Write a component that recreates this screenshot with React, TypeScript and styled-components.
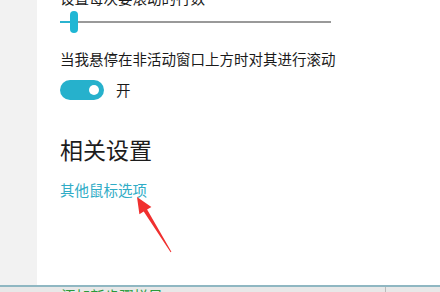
import styled, { createGlobalStyle } from 'styled-components'

const Global = createGlobalStyle`
  html, body { margin: 0; padding: 0; background: #fff; }
  body { width: 440px; height: 292px; overflow: hidden; font-family: "Noto Sans CJK SC", "Noto Sans", sans-serif; }
`

const Shell = styled.div`
  width: 440px;
  height: 292px;
  display: flex;
  flex-direction: column;
  overflow: hidden;
`

const Body = styled.div`
  flex: 1;
  display: flex;
  min-height: 0;
`

const Side = styled.div`
  width: 37px;
  background: #f2f2f2;
`

const Main = styled.div`
  position: relative;
  flex: 1;
  background: #fff;
  padding: 0 0 0 23px;
  margin-top: -12px;
`

const Label = styled.div<{ $gap?: number }>`
  font-size: 14.5px;
  color: #1a1a1a;
  line-height: 20px;
  margin-top: ${p => p.$gap ?? 0}px;
`

const SliderRow = styled.div`
  position: relative;
  width: 271px;
  height: 24px;
  margin-top: 2px;
  display: flex;
  align-items: center;
`

const Track = styled.div`
  flex: 1;
  height: 2px;
  background: #999;
  background-image: linear-gradient(to right, #2bb3cf 0 12px, transparent 12px);
`

const Thumb = styled.div`
  position: absolute;
  left: 10px;
  top: 1px;
  width: 8px;
  height: 22px;
  border-radius: 4px;
  background: #1fb6d4;
`

const ToggleRow = styled.div`
  display: flex;
  align-items: center;
  gap: 12px;
  margin-top: 11px;
`

const Toggle = styled.div`
  width: 44px;
  height: 20px;
  border-radius: 10px;
  background: #26b1cc;
  display: flex;
  align-items: center;
  justify-content: flex-end;
  padding-right: 5px;
  box-sizing: border-box;
`

const Knob = styled.div`
  width: 10px;
  height: 10px;
  border-radius: 50%;
  background: #fff;
`

const Heading = styled.div`
  font-size: 23px;
  color: #1c1c1c;
  line-height: 30px;
  margin-top: 34px;
`

const Link = styled.div`
  font-size: 14.5px;
  color: #30acc6;
  line-height: 20px;
  margin-top: 16px;
`

const Arrow = styled.svg`
  position: absolute;
  left: 95px;
  top: 207px;
`

const Footer = styled.div`
  height: 5px;
  border-top: 2px solid #8fb7c2;
  background: #e8e8e8;
  position: relative;
  overflow: hidden;
  display: flex;
`

const FooterText = styled.div`
  margin-left: 50px;
  margin-top: -1px;
  font-size: 14.5px;
  line-height: 20px;
  color: #2a9a3a;
  width: 335px;
`

const Divider = styled.div`
  width: 1px;
  background: #bbb;
`

export default function App() {
  return (
    <Shell>
      <Global />
      <Body>
        <Side />
        <Main>
          <Label>设置每次要滚动的行数</Label>
          <SliderRow>
            <Track />
            <Thumb />
          </SliderRow>
          <Label $gap={15}>当我悬停在非活动窗口上方时对其进行滚动</Label>
          <ToggleRow>
            <Toggle>
              <Knob />
            </Toggle>
            <Label>开</Label>
          </ToggleRow>
          <Heading>相关设置</Heading>
          <Link>其他鼠标选项</Link>
          <Arrow width="44" height="62" viewBox="0 0 44 62">
            <path
              d="M5 2 L19.4 11.9 L15.1 14.6 L39.4 56.7 L38.6 57.3 L11.7 16.6 L7.4 19.3 Z"
              fill="#f0302f"
            />
          </Arrow>
        </Main>
      </Body>
      <Footer>
        <FooterText>+ 添加新步骤栏目</FooterText>
        <Divider />
      </Footer>
    </Shell>
  )
}
